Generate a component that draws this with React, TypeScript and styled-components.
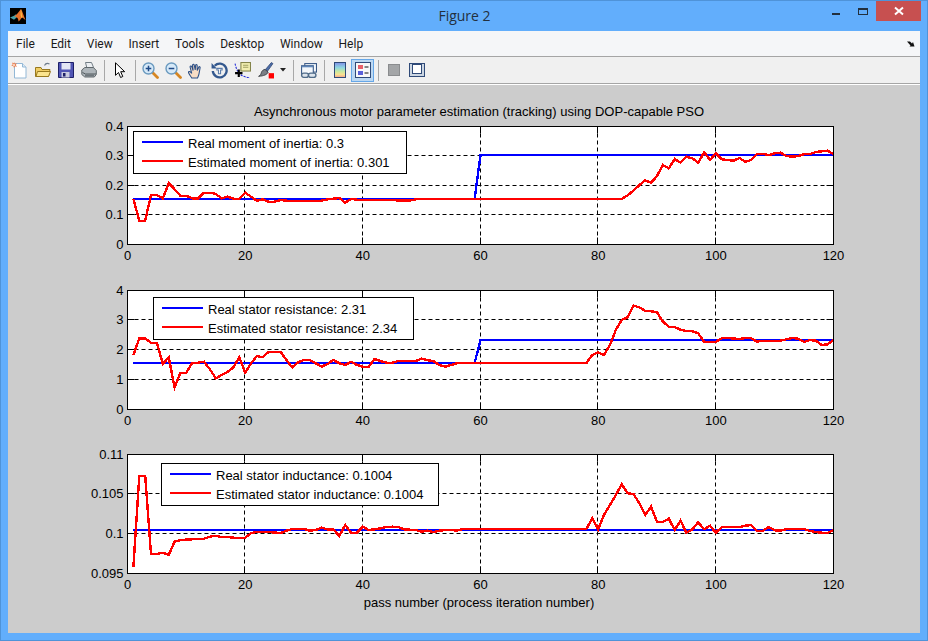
import React from "react";
import styled, { createGlobalStyle } from "styled-components";

type Point = [number, number];

interface SeriesSet {
  real: Point[];
  estimated: Point[];
}

// traced from the plot, x = pass number, y = screen row
const inertia: SeriesSet = {
  real: [[1, 199], [59, 199], [60, 155], [120, 155]],
  estimated: [
    [1, 199], [2, 220.7], [3, 220.7], [4, 195], [5, 195], [6, 198.3], [7, 183.3], [8, 189.3], [9, 195.7], [10, 195.7],
    [11, 198.3], [12, 198.3], [13, 192.7], [14, 192.7], [15, 194], [16, 198.3], [17, 196.7], [18, 198.7], [19, 198.7], [20, 192.7],
    [21, 196.7], [22, 200.7], [23, 199.3], [24, 201.7], [25, 201.7], [26, 200], [27, 200.7], [33, 200.7], [34, 199.3], [35, 198.7],
    [36, 198], [37, 202.7], [38, 199], [39, 199.7], [45, 200], [46, 200.5], [48, 200.5], [49, 199.3], [50, 199], [84, 199],
    [85, 195.3], [86, 190.7], [87, 185], [88, 180.3], [89, 182.7], [90, 176], [91, 165], [92, 168.3], [93, 159], [94, 162.7],
    [95, 156.7], [96, 158.3], [97, 162.7], [98, 152.3], [99, 160], [100, 153.3], [101, 159.3], [102, 160], [103, 160.7], [104, 158],
    [105, 161.7], [106, 160], [107, 154.3], [108, 153.7], [109, 155.3], [110, 153.3], [111, 152.7], [112, 156], [113, 156.7], [114, 156],
    [115, 154.3], [116, 154], [117, 152], [118, 151.3], [119, 150.7], [120, 154.3],
  ],
};

const resistance: SeriesSet = {
  real: [[1, 363], [59, 363], [60, 340], [120, 340]],
  estimated: [
    [1, 355], [2, 338.3], [3, 338.3], [4, 342.7], [5, 342.7], [6, 364], [7, 357.3], [8, 387.3], [9, 372.7], [10, 372.7],
    [11, 362.7], [12, 362.7], [13, 361.7], [14, 369.3], [15, 378.3], [16, 375], [17, 372], [18, 367.3], [19, 357.3], [20, 372.7],
    [21, 363.3], [22, 356], [23, 357.3], [24, 351.7], [26, 351.7], [27, 360], [28, 367.3], [29, 362.3], [30, 360], [31, 360],
    [32, 363.3], [33, 366.7], [34, 364], [35, 360], [36, 363.3], [37, 365], [38, 361.7], [39, 365], [40, 366.7], [41, 366.7],
    [42, 359], [43, 361], [44, 362.7], [45, 362.7], [46, 361], [49, 361], [50, 358.7], [51, 360.3], [52, 361], [53, 365],
    [54, 366.7], [55, 365], [56, 363.3], [57, 363], [78, 363], [79, 355], [80, 352.3], [81, 355], [82, 345], [83, 330],
    [84, 320], [85, 317.3], [86, 305.7], [87, 307.3], [88, 311], [89, 311.3], [90, 312.3], [91, 321.7], [92, 326.7], [93, 327],
    [94, 329.7], [95, 331], [96, 331.3], [97, 333.3], [98, 341.7], [100, 342], [101, 338.3], [102, 338], [104, 339], [105, 338],
    [106, 338.3], [107, 341.7], [108, 340.7], [111, 340.7], [112, 339.3], [113, 338], [114, 338.7], [115, 342], [116, 340], [117, 340.7],
    [118, 345], [119, 344.3], [120, 340],
  ],
};

const inductance: SeriesSet = {
  real: [[1, 530], [120, 530]],
  estimated: [
    [1, 566.7], [2, 476], [3, 476], [4, 554], [5, 554], [6, 552.7], [7, 555], [8, 541.7], [9, 540], [11, 539.3],
    [13, 538.7], [14, 536.7], [15, 535.7], [16, 537], [17, 537], [18, 537.7], [19, 538], [20, 537.7], [21, 533.3], [22, 531.7],
    [24, 532], [26, 533], [27, 530.7], [28, 529], [30, 529], [31, 530.7], [32, 530], [33, 527.7], [34, 529.3], [35, 529.3],
    [36, 536], [37, 525], [38, 532.7], [39, 532.7], [40, 526.7], [41, 530], [42, 529.3], [43, 528.3], [44, 527], [45, 526.7],
    [46, 527], [47, 529.3], [48, 529.7], [49, 530], [50, 531.7], [51, 530.7], [52, 532], [53, 530.7], [54, 530], [55, 530],
    [56, 530.7], [57, 529], [78, 529], [79, 518.3], [80, 529.3], [81, 515], [82, 505], [83, 495], [84, 484.3], [85, 493.3],
    [86, 494], [87, 503.3], [88, 515], [89, 506.7], [90, 521.7], [91, 521.7], [92, 518.7], [93, 530], [94, 520.7], [95, 532.7],
    [96, 529.3], [97, 522.3], [98, 529.3], [99, 525.7], [100, 532.7], [101, 527.3], [104, 527], [105, 525.7], [106, 525], [107, 530.7],
    [108, 530.7], [109, 527], [110, 530.3], [111, 530.7], [112, 529], [115, 529], [116, 531], [117, 532], [118, 532.7], [119, 533],
    [120, 530],
  ],
};

const menuItems = ["File", "Edit", "View", "Insert", "Tools", "Desktop", "Window", "Help"];

const GlobalStyle = createGlobalStyle`
  html, body {
    margin: 0;
    padding: 0;
    background: #62aefc;
  }
`;

const X_LEFT = 119.5;
const X_RIGHT = 825.5;
const xScale = (X_RIGHT - X_LEFT) / 120;

const Axes = ({
  top,
  height,
  yMin,
  yMax,
  yTicks,
  data,
}: {
  top: number;
  height: number;
  yMin: number;
  yMax: number;
  yTicks: string[];
  data: SeriesSet;
}) => {
  const line = (points: Point[]) =>
    points.map(([i, y]) => `${(X_LEFT + i * xScale).toFixed(1)},${(y - top).toFixed(1)}`).join(" ");
  const bottom = height + 0.5;
  return (
    <AxesSvg width={912} height={150}>
      <rect x={X_LEFT} y={0.5} width={X_RIGHT - X_LEFT} height={height} fill="#fff" />
      {[20, 40, 60, 80, 100].map((tick) => {
        const x = Math.floor(X_LEFT + tick * xScale - 0.5) + 0.5;
        return (
          <g key={tick} stroke="#000">
            <line x1={x} x2={x} y1={0.5} y2={bottom} strokeDasharray="4 3" />
            <line x1={x} x2={x} y1={0.5} y2={7.5} />
            <line x1={x} x2={x} y1={bottom - 7} y2={bottom} />
          </g>
        );
      })}
      {yTicks.map((label) => {
        const y = Math.floor(height * (1 - (Number(label) - yMin) / (yMax - yMin)) + 0.001) + 0.5;
        const inner = y > 1 && y < bottom - 1;
        return (
          <g key={label}>
            {inner && (
              <g stroke="#000">
                <line x1={X_LEFT} x2={X_RIGHT} y1={y} y2={y} strokeDasharray="4 3" />
                <line x1={X_LEFT} x2={X_LEFT + 7} y1={y} y2={y} />
                <line x1={X_RIGHT - 7} x2={X_RIGHT} y1={y} y2={y} />
              </g>
            )}
            <TickLabel x={X_LEFT - 4} y={y + 4.5} textAnchor="end">
              {label}
            </TickLabel>
          </g>
        );
      })}
      {[0, 20, 40, 60, 80, 100, 120].map((tick) => (
        <TickLabel key={tick} x={X_LEFT + tick * xScale} y={bottom + 15.5} textAnchor="middle">
          {tick}
        </TickLabel>
      ))}
      <polyline points={line(data.real)} fill="none" stroke="#0000ff" strokeWidth={2.4} shapeRendering="crispEdges" />
      <polyline points={line(data.estimated)} fill="none" stroke="#ff0000" strokeWidth={2.4} shapeRendering="crispEdges" />
      <rect x={X_LEFT} y={0.5} width={X_RIGHT - X_LEFT} height={height} fill="none" stroke="#000" />
    </AxesSvg>
  );
};

const Legend = ({
  left,
  top,
  width,
  real,
  estimated,
}: {
  left: number;
  top: number;
  width: number;
  real: string;
  estimated: string;
}) => (
  <LegendBox $left={left} $top={top} $width={width}>
    <LegendRow>
      <LegendSample $color="#0000ff" />
      {real}
    </LegendRow>
    <LegendRow>
      <LegendSample $color="#ff0000" />
      {estimated}
    </LegendRow>
  </LegendBox>
);

const NewIcon = () => (
  <svg width="17" height="17" viewBox="0 0 17 17">
    <path d="M3.500 1.500h8l3.500 3.500v11h-11.500z" fill="#fff" stroke="#93b8d6" />
    <path d="M11.500 1.500v3.500h3.500" fill="#dfeaf4" stroke="#93b8d6" />
    <path d="M3 0l1 1.700 1.900-.6-1 1.900 1 1.900-1.900-.6-1 1.700-.7-1.900-2 -.3 1.400-1.300-.7-2 1.800.8z" fill="#ee8252" />
    <circle cx="3" cy="3" r="1.100" fill="#fbe0d0" />
  </svg>
);

const OpenIcon = () => (
  <svg width="16" height="16" viewBox="0 0 16 16">
    <path d="M9.500 3.500c1-2 3-2.500 5-1.500" fill="none" stroke="#6e7c8c" strokeWidth="1.200" />
    <path d="M.5 5.500v9h13l1.500-7h-8l-1-2z" fill="#f0cd64" stroke="#98791e" />
    <path d="M1 14.500l1.500-5h13l-2 5z" fill="#fbe48e" stroke="#98791e" />
  </svg>
);

const SaveIcon = () => (
  <svg width="16" height="16" viewBox="0 0 16 16">
    <path d="M.5 .5h15v15h-15z" fill="#5055b4" stroke="#1e2068" />
    <rect x="3.500" y="1" width="9" height="6.500" fill="#e4e6f4" />
    <rect x="3.500" y="10" width="8" height="5.500" fill="#c9cbe0" />
    <rect x="5" y="11" width="2.500" height="3.500" fill="#1e2068" />
  </svg>
);

const PrintIcon = () => (
  <svg width="16" height="16" viewBox="0 0 16 16">
    <path d="M4.500 .5h6l2.500 6h-7z" fill="#eceff2" stroke="#727d85" />
    <path d="M.8 8l3-2.500h8.500l3 3v4l-2 2.500h-9.500l-3-2.500z" fill="#aeb5ba" stroke="#60686c" />
    <path d="M1.500 10.500l3 1.500h10.500" fill="none" stroke="#50585c" />
    <rect x="4" y="12.500" width="9" height="2" fill="#6f777c" />
  </svg>
);

const PointerIcon = () => (
  <svg width="12" height="17" viewBox="0 0 12 17">
    <path d="M1.500 .8v12.500l3-2.800 2.100 5 2.200-1-2.100-4.800h4z" fill="#fff" stroke="#000" />
  </svg>
);

const ZoomIcon = ({ plus }: { plus?: boolean }) => (
  <svg width="17" height="17" viewBox="0 0 17 17">
    <path d="M10.500 10.500l5 5" stroke="#d68622" strokeWidth="2.800" strokeLinecap="round" />
    <circle cx="6.500" cy="6.500" r="5.500" fill="#d6e9f8" stroke="#6b9abf" strokeWidth="1.400" />
    <path d="M3.700 6.500h5.600" stroke="#1f4a88" strokeWidth="1.500" />
    {plus && <path d="M6.500 3.700v5.600" stroke="#1f4a88" strokeWidth="1.500" />}
  </svg>
);

const HandIcon = () => (
  <svg width="17" height="17" viewBox="0 0 16 16">
    <path
      d="M3.500 15c-.8-1.500-2.800-4-3-5-.2-1 1-1.300 1.700-.6l1.300 1.400-1.500-6c-.2-1 1-1.500 1.500-.5l1.300 3.700-.5-5c0-1 1.300-1.200 1.500-.2l1 4.700.4-4.500c.1-1 1.400-.9 1.400.1l.1 5 1.400-3.200c.4-.9 1.500-.5 1.300.5l-1 5.500c-.4 2-1 3-1.400 4.100z"
      fill="#f7dcc4"
      stroke="#2a4e86"
      strokeWidth="1"
    />
  </svg>
);

const RotateIcon = () => (
  <svg width="17" height="17" viewBox="0 0 16 16">
    <path d="M3.500 3.500a6.500 6.500 0 1 1-1.800 5" fill="none" stroke="#33588e" strokeWidth="2.200" />
    <path d="M.5 1v5h5z" fill="#33588e" />
    <path d="M5.500 6h5v1.500h-1.500v3.500h-2v-3.500h-1.500z" fill="none" stroke="#5a7cab" />
  </svg>
);

const DataCursorIcon = () => (
  <svg width="17" height="17" viewBox="0 0 16 16">
    <path d="M1 1.500c1 5 3 10 8 12 2 .7 4 1 6 1.300" fill="none" stroke="#2028d8" strokeDasharray="2 1" />
    <rect x="6.500" y=".5" width="9" height="8" fill="#f2eeb0" stroke="#84844a" />
    <path d="M8.500 3h5M8.500 5h5" stroke="#a0a060" />
    <path d="M4.500 7v7M1 10.500h7" stroke="#000" strokeWidth="2" />
  </svg>
);

const BrushIcon = () => (
  <svg width="17" height="17" viewBox="0 0 16 16">
    <path d="M8 7l5.500-6.500 1.500 1-5 7z" fill="#4c6ea8" stroke="#2b3f6c" strokeWidth=".7" />
    <path d="M7.500 7l3 2.500c-1 2.500-4 3.500-9 4 2-1 2.300-2.500 2.700-3.800.5-1.500 2-2.700 3.300-2.700z" fill="#7b7f86" stroke="#33363c" strokeWidth=".8" />
    <rect x="11" y="10.500" width="5" height="5" fill="#ff0000" />
  </svg>
);

const DropArrow = () => (
  <svg width="6" height="4" viewBox="0 0 6 4">
    <path d="M0 0h6l-3 3.500z" fill="#222" />
  </svg>
);

const LinkIcon = () => (
  <svg width="17" height="17" viewBox="0 0 16 16">
    <rect x="4.500" y="1.500" width="11" height="8" fill="#f4f8fc" stroke="#365684" />
    <rect x="1.500" y="3.500" width="11" height="8" fill="#f4f8fc" stroke="#365684" />
    <path d="M1.500 3.500h11v1.500h-11z" fill="#5f86b8" />
    <rect x="1.500" y="10.500" width="6.500" height="4" rx="2" fill="#dce4ec" stroke="#4f6b89" strokeWidth="1.300" />
    <rect x="8" y="10.500" width="7" height="4" rx="2" fill="#dce4ec" stroke="#4f6b89" strokeWidth="1.300" />
  </svg>
);

const ColorbarIcon = () => (
  <svg width="12" height="16" viewBox="0 0 12 16">
    <defs>
      <linearGradient id="rainbow" x1="0" y1="0" x2="0" y2="1">
        <stop offset="0" stopColor="#7f8fe8" />
        <stop offset=".35" stopColor="#8fd8e0" />
        <stop offset=".6" stopColor="#c8e8a0" />
        <stop offset=".8" stopColor="#f8e090" />
        <stop offset="1" stopColor="#f0a090" />
      </linearGradient>
    </defs>
    <rect x=".5" y=".5" width="11" height="15" fill="url(#rainbow)" stroke="#2f4a78" />
  </svg>
);

const LegendIcon = () => (
  <svg width="16" height="16" viewBox="0 0 16 16">
    <rect x=".5" y=".5" width="15" height="15" fill="#f8f8f8" stroke="#2f4a78" />
    <rect x="3" y="3" width="5" height="4" fill="#e8606a" />
    <rect x="3" y="9" width="5" height="4" fill="#5a60d8" />
    <path d="M9.500 5h4M9.500 11h4" stroke="#111" />
  </svg>
);

const SquareIcon = () => (
  <svg width="12" height="12" viewBox="0 0 12 12">
    <rect x=".5" y=".5" width="11" height="11" fill="#a3a5a7" stroke="#8a8c8e" />
  </svg>
);

const BrowserIcon = () => (
  <svg width="16" height="14" viewBox="0 0 16 14">
    <rect x=".5" y=".5" width="15" height="13" fill="#ccd6e2" stroke="#2f4a78" />
    <rect x="3.500" y="1.500" width="9" height="9" fill="#fff" stroke="#2f4a78" />
  </svg>
);

const MatlabLogo = () => (
  <svg width="16" height="16" viewBox="0 0 16 16">
    <rect width="16" height="16" fill="#000" />
    <path d="M0 9.500l4-1.700 2-1.500 1.500 2.500-3.500 3z" fill="#4aa0a8" />
    <path d="M4 9l3.500-3.500 3.500-4.500c1.500 2.500 3 8 4.500 11-1.500-1-2.500-2.500-3.500-2.500-1 1.500-2.500 3-3.500 4 0-3-1.500-5.500-4.500-4.500z" fill="#e8702a" />
    <path d="M11 1c-.5 3-.8 6 .5 9l1-.5c-.7-3-1-6-1.500-8.500z" fill="#f8c040" />
  </svg>
);

const App = () => (
  <Window>
    <GlobalStyle />
    <TitleBar>
      <LogoSlot>
        <MatlabLogo />
      </LogoSlot>
      <TitleText>Figure 2</TitleText>
      <MinimizeGlyph />
      <MaximizeGlyph />
      <CloseButton>
        <svg width="10" height="10" viewBox="0 0 10 10">
          <path d="M1 1.500l8 7M9 1.500l-8 7" stroke="#fff" strokeWidth="2" />
        </svg>
      </CloseButton>
    </TitleBar>

    <MenuBar>
      {menuItems.map((item) => (
        <MenuItem key={item}>{item}</MenuItem>
      ))}
      <DockArrow>
        <svg width="8" height="6" viewBox="0 0 8 6">
          <path d="M0 .5h3l2 2 1-1.500 1.500 4.500h-5l1-1z" fill="#111" />
        </svg>
      </DockArrow>
    </MenuBar>

    <ToolBar>
      <ToolButton><NewIcon /></ToolButton>
      <ToolButton><OpenIcon /></ToolButton>
      <ToolButton><SaveIcon /></ToolButton>
      <ToolButton><PrintIcon /></ToolButton>
      <ToolSeparator />
      <ToolButton><PointerIcon /></ToolButton>
      <ToolSeparator />
      <ToolButton><ZoomIcon plus /></ToolButton>
      <ToolButton><ZoomIcon /></ToolButton>
      <ToolButton><HandIcon /></ToolButton>
      <ToolButton><RotateIcon /></ToolButton>
      <ToolButton><DataCursorIcon /></ToolButton>
      <ToolButton><BrushIcon /></ToolButton>
      <DropSlot><DropArrow /></DropSlot>
      <ToolSeparator />
      <ToolButton><LinkIcon /></ToolButton>
      <ToolSeparator />
      <ToolButton><ColorbarIcon /></ToolButton>
      <ToolButton $active><LegendIcon /></ToolButton>
      <ToolSeparator />
      <ToolButton><SquareIcon /></ToolButton>
      <ToolButton><BrowserIcon /></ToolButton>
    </ToolBar>

    <Figure>
      <PlotTitle>Asynchronous motor parameter estimation (tracking) using DOP-capable PSO</PlotTitle>
      <AxesBlock $height={164}>
        <Axes top={126} height={118} yMin={0} yMax={0.4} yTicks={["0", "0.1", "0.2", "0.3", "0.4"]} data={inertia} />
        <Legend left={125} top={5} width={274} real="Real moment of inertia: 0.3" estimated="Estimated moment of inertia: 0.301" />
      </AxesBlock>
      <AxesBlock $height={164}>
        <Axes top={290} height={119} yMin={0} yMax={4} yTicks={["0", "1", "2", "3", "4"]} data={resistance} />
        <Legend left={145} top={7} width={261} real="Real stator resistance: 2.31" estimated="Estimated stator resistance: 2.34" />
      </AxesBlock>
      <AxesBlock $height={142}>
        <Axes top={454} height={119} yMin={0.095} yMax={0.11} yTicks={["0.095", "0.1", "0.105", "0.11"]} data={inductance} />
        <Legend left={153} top={9} width={278} real="Real stator inductance: 0.1004" estimated="Estimated stator inductance: 0.1004" />
      </AxesBlock>
      <XLabel>pass number (process iteration number)</XLabel>
    </Figure>
  </Window>
);

export default App;

const Window = styled.div`
  box-sizing: border-box;
  width: 928px;
  height: 641px;
  padding: 0 8px 8px;
  display: flex;
  flex-direction: column;
  background: #62aefc;
  box-shadow: inset 0 0 0 1px #4f93d8;
  overflow: hidden;
`;

const TitleBar = styled.div`
  position: relative;
  flex: none;
  height: 31px;
`;

const LogoSlot = styled.div`
  position: absolute;
  left: 2px;
  top: 8px;
  width: 16px;
  height: 16px;
`;

const TitleText = styled.div`
  padding-left: 1px;
  text-align: center;
  font: 14px/31px "Open Sans", sans-serif;
  color: #22303e;
`;

const MinimizeGlyph = styled.div`
  position: absolute;
  left: 824px;
  top: 13px;
  width: 8px;
  height: 2px;
  background: #22303e;
`;

const MaximizeGlyph = styled.div`
  position: absolute;
  left: 850px;
  top: 8px;
  box-sizing: border-box;
  width: 10px;
  height: 7px;
  border: 1px solid #22303e;
  border-top-width: 2px;
`;

const CloseButton = styled.div`
  position: absolute;
  left: 868px;
  top: 1px;
  width: 45px;
  height: 20px;
  display: flex;
  align-items: center;
  justify-content: center;
  background: #c75050;
`;

const MenuBar = styled.div`
  flex: none;
  height: 25px;
  padding-left: 8px;
  display: flex;
  align-items: center;
  gap: 15.8px;
  background: #f5f6f8;
  border-bottom: 1px solid #a5a5a5;
`;

const MenuItem = styled.span`
  font: 12px Roboto, sans-serif;
  color: #1a1a1a;
`;

const DockArrow = styled.span`
  margin-left: auto;
  margin-right: 5px;
  display: flex;
`;

const ToolBar = styled.div`
  flex: none;
  height: 26px;
  display: flex;
  align-items: center;
  background: #f0f0f0;
  border-bottom: 1px solid #a5a5a5;
`;

const ToolButton = styled.div<{ $active?: boolean }>`
  box-sizing: border-box;
  flex: none;
  width: 23px;
  height: 23px;
  display: flex;
  align-items: center;
  justify-content: center;
  background: ${(p) => (p.$active ? "#bcd8f2" : "transparent")};
  border: 1px solid ${(p) => (p.$active ? "#66a7e8" : "transparent")};
`;

const DropSlot = styled.div`
  flex: none;
  width: 12px;
  display: flex;
  justify-content: center;
`;

const ToolSeparator = styled.div`
  flex: none;
  width: 1px;
  height: 21px;
  margin: 0 3.5px;
  background: #a8a8a8;
`;

const Figure = styled.div`
  flex: 1;
  display: flex;
  flex-direction: column;
  background: #cccccc;
  border-top: 1px solid #fff;
`;

const PlotTitle = styled.div`
  height: 41px;
  box-sizing: border-box;
  padding: 20px 0 0 30px;
  text-align: center;
  font: 13px/14px "Liberation Sans", sans-serif;
  color: #000;
`;

const AxesBlock = styled.div<{ $height: number }>`
  position: relative;
  flex: none;
  height: ${(p) => p.$height}px;
`;

const AxesSvg = styled.svg`
  display: block;
  overflow: visible;
`;

const TickLabel = styled.text`
  font: 13px "Liberation Sans", sans-serif;
  fill: #000;
`;

const LegendBox = styled.div<{ $left: number; $top: number; $width: number }>`
  position: absolute;
  left: ${(p) => p.$left}px;
  top: ${(p) => p.$top}px;
  box-sizing: border-box;
  width: ${(p) => p.$width}px;
  height: 43px;
  padding-left: 8px;
  background: #fff;
  border: 1px solid #000;
  display: flex;
  flex-direction: column;
  justify-content: center;
`;

const LegendRow = styled.div`
  height: 19px;
  display: flex;
  align-items: center;
  gap: 5px;
  font: 13px "Liberation Sans", sans-serif;
  color: #000;
`;

const LegendSample = styled.span<{ $color: string }>`
  flex: none;
  width: 41px;
  height: 2px;
  margin-bottom: 2px;
  background: ${(p) => p.$color};
`;

const XLabel = styled.div`
  padding-left: 30px;
  text-align: center;
  font: 13px/14px "Liberation Sans", sans-serif;
  color: #000;
`;
